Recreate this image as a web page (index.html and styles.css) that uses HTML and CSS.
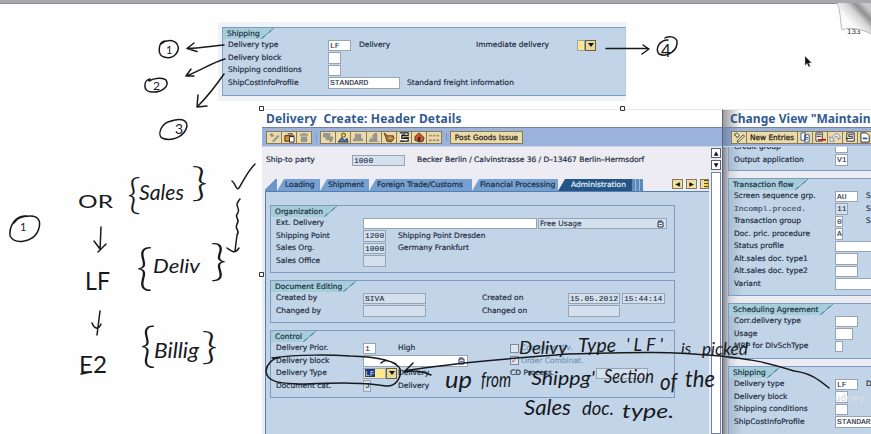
FILE: index.html
```html
<!DOCTYPE html>
<html lang="en">
<head>
<meta charset="utf-8">
<title>Shipping – Delivery type</title>
<link rel="stylesheet" href="styles.css">
</head>
<body>
<main class="slide">
  <div class="topbar"></div>

  <section class="clip">
    <div class="group top-ship">
      <h3>Shipping</h3>
      <div class="row"><label>Delivery type</label><i class="f w23">LF</i><span class="gap8 w117">Delivery</span><span class="w101">Immediate delivery</span><i class="f yellow w8"></i><b class="drop"></b></div>
      <div class="row"><label>Delivery block</label><i class="f w13"></i></div>
      <div class="row"><label>Shipping conditions</label><i class="f w13"></i></div>
      <div class="row"><label>ShipCostInfoProfile</label><i class="f w72">STANDARD</i><span class="gap7">Standard freight information</span></div>
    </div>
  </section>

  <section class="window delivery">
    <h1 class="t1">Delivery&nbsp; Create: Header Details</h1>
    <div class="toolbar">
      <div class="btns">
        <svg viewBox="0 0 15 12"><path class="g" d="M2 3l3-2 3 3-3 2-1-2zM6 9l6-6 1.500 1.500-6 6-2 .5z"/></svg>
        <svg viewBox="0 0 15 12"><path d="M3 4h6v6H3z" fill="#ed8d24" stroke="#222"/><path d="M8 5h5v6H8z" fill="#fff" stroke="#222"/><path d="M6 2h5v3M9 3.500l2 2 2-2" fill="none" stroke="#222"/></svg>
        <svg viewBox="0 0 15 12"><path class="g" d="M3 2h9v2H3zM4 5h7v6H4zM6 1h3v1H6z"/></svg>
      </div>
      <u></u>
      <div class="btns">
        <svg viewBox="0 0 15 12"><path class="g" d="M2 1h8v5H2zM5 5h8v4H5zM9 9h3v2H9z"/></svg>
        <svg viewBox="0 0 15 12"><path d="M2 11l4-5 3 3 3-2 1 4H2z" fill="#4a78b8" stroke="#222" stroke-width=".8"/><circle cx="8" cy="3.500" r="2.200" fill="#f7d23c" stroke="#222" stroke-width=".8"/></svg>
        <svg viewBox="0 0 15 12"><path class="g" d="M4 2h7v5H4zM2 7h11v3H2z"/></svg>
        <svg viewBox="0 0 15 12"><path class="g" d="M8 1h3v9h2v1H2v-2l5-7zM4 7h2V4z"/></svg>
        <svg viewBox="0 0 15 12"><path d="M2 1l4 3h6l1 3-3 4-5-1-1-4z" fill="#a8672c" stroke="#432" stroke-width=".8"/><path d="M6 7h6M7 5.500h3" stroke="#e7b866"/></svg>
        <svg viewBox="0 0 15 12"><path d="M3 1h9v3H5v3h7v3H3" fill="#fff" stroke="#222" stroke-width="1.3"/><path d="M5 2.500h4M7 6h6M4 10h3" stroke="#222"/></svg>
        <svg viewBox="0 0 15 12"><path d="M7.500 1l5.500 5-1 4-4 1-5-2V5z" fill="#dd5420" stroke="#222" stroke-width=".8"/><path d="M6 6l3-1v5H6z" fill="#333"/></svg>
        <svg viewBox="0 0 15 12"><path d="M2 4h3m1 0h3m1 0h3M2 9h3m1 0h3m1 0h3" stroke="#a29470" stroke-width="2"/></svg>
      </div>
      <u></u>
      <button class="post">Post Goods Issue</button>
    </div>
    <div class="body">
      <div class="main">
        <div class="party"><label>Ship-to party</label><i class="f ro w53">1000</i><span>Becker Berlin / Calvinstrasse 36 / D–13467 Berlin–Hermsdorf</span></div>
        <nav class="tabs">
          <s></s><a class="ta">Loading</a><a class="tb">Shipment</a><a class="tc">Foreign Trade/Customs</a><a class="td">Financial Processing</a><a class="te on">Administration</a><em></em>
          <div class="arrows"><b>◀</b><b>▶</b><b class="list"></b></div>
        </nav>
        <div class="sheet">
          <div class="group org">
            <h3>Organization</h3>
            <div class="row"><label>Ext. Delivery</label><i class="f w174"></i><i class="f ro usage">Free Usage<svg class="doc" viewBox="0 0 7 8"><path d="M1 2h5v5H1zM1 1h4M2.500 4.500h2" fill="#e8eef4" stroke="#234"/></svg></i></div>
            <div class="row"><label>Shipping Point</label><i class="f ro w23">1200</i><span class="gap12">Shipping Point Dresden</span></div>
            <div class="row"><label>Sales Org.</label><i class="f ro w23">1000</i><span class="gap12">Germany Frankfurt</span></div>
            <div class="row"><label>Sales Office</label><i class="f ro w23"></i></div>
          </div>
          <div class="group edit">
            <h3>Document Editing</h3>
            <div class="row"><label>Created by</label><i class="f ro w63">SIVA</i><span class="gap56 w87">Created on</span><i class="f ro w52">15.05.2012</i><i class="f ro time">15:44:14</i></div>
            <div class="row"><label>Changed by</label><i class="f ro w63"></i><span class="gap56 w87">Changed on</span><i class="f ro w52"></i></div>
          </div>
          <div class="group control">
            <h3>Control</h3>
            <div class="row"><label>Delivery Prior.</label><i class="f w13">1</i><span class="gap22 w112">High</span><b class="check"></b><span class="dim">Complete dlv.</span></div>
            <div class="row"><label>Delivery block</label><i class="f w105"><svg class="doc" viewBox="0 0 7 8"><path d="M1 2h5v5H1zM1 1h4M2.500 4.500h2" fill="#e8eef4" stroke="#234"/></svg></i><b class="check far">✓</b><span class="dim">Order Combinat.</span></div>
            <div class="row"><label>Delivery Type</label><i class="f yellow w23"><mark>LF</mark></i><b class="drop"></b><span class="gap2 w112">Delivery</span><span class="w86">CD Process.</span><i class="f ro w52"></i></div>
            <div class="row"><label>Document cat.</label><i class="f ro w8">J</i><span class="gap28">Delivery</span></div>
          </div>
        </div>
      </div>
      <div class="scroll"><b>▲</b><b>▼</b><p></p></div>
    </div>
  </section>

  <section class="window view">
    <h1 class="t2">Change View "Maintain</h1>
    <div class="toolbar">
      <div class="btns">
        <svg viewBox="0 0 15 12"><path d="M2 3l3-2 3 3-3 2-1-2zM6 9l6-6 1.500 1.500-6 6-2 .5z" fill="#f5ecc9" stroke="#333" stroke-width=".9"/></svg>
        <button class="new">New Entries</button>
        <svg viewBox="0 0 15 12"><path d="M3 1h5v8H3zM7 3h5v8H7z" fill="#fff" stroke="#3c568c"/><path d="M8 6h3m-3 2h3" stroke="#3c568c"/></svg>
        <svg viewBox="0 0 15 12"><path d="M3 1h7v9H3z" fill="#fff" stroke="#333"/><path d="M4 3h5M4 5h5" stroke="#333"/><path d="M5 8.500h9" stroke="#b42020" stroke-width="2"/></svg>
        <svg viewBox="0 0 15 12"><path d="M2 5v5h5L5 8c3-5 6-4 6 0l2-1c0-6-6-7-9 0z" fill="#fff" stroke="#5d6391" stroke-width=".8"/></svg>
        <svg viewBox="0 0 15 12"><path d="M4 1h8v9H4z" fill="#fff" stroke="#222"/><path d="M3 7h7V5H6V3h5" fill="none" stroke="#222"/></svg>
        <svg viewBox="0 0 15 12"><path d="M3 1h6l3 3v7H3z" fill="#fff" stroke="#222"/><path d="M5 7h5" stroke="#26a" stroke-width="2"/></svg>
      </div>
    </div>
    <div class="vbody">
      <div class="group v1">
        <div class="row"><label>Credit group</label><i class="f w13"></i></div>
        <div class="row"><label>Output application</label><i class="f w13">V1</i></div>
      </div>
      <div class="group v2">
        <h3>Transaction flow</h3>
        <div class="row"><label>Screen sequence grp.</label><i class="f w23">AU</i><span class="gap8">S</span></div>
        <div class="row"><label class="mono">Incompl.proced.</label><i class="f ro w13">11</i><span class="gap18">S</span></div>
        <div class="row"><label>Transaction group</label><i class="f w8">0</i><span class="gap23">S</span></div>
        <div class="row"><label>Doc. pric. procedure</label><i class="f w8">A</i></div>
        <div class="row"><label>Status profile</label><i class="f w72"></i></div>
        <div class="row"><label>Alt.sales doc. type1</label><i class="f w23"></i></div>
        <div class="row"><label>Alt.sales doc. type2</label><i class="f w23"></i></div>
        <div class="row"><label>Variant</label><i class="f w72"></i></div>
      </div>
      <div class="group v3">
        <h3>Scheduling Agreement</h3>
        <div class="row"><label>Corr.delivery type</label><i class="f w23"></i></div>
        <div class="row"><label>Usage</label><i class="f w18"></i></div>
        <div class="row"><label>MRP for DlvSchType</label><i class="f w8"></i></div>
      </div>
      <div class="group v4">
        <h3>Shipping</h3>
        <div class="row"><label>Delivery type</label><i class="f w23">LF</i><span class="gap8">D</span></div>
        <div class="row"><label>Delivery block</label><i class="f w13"></i></div>
        <div class="row"><label>Shipping conditions</label><i class="f w13"></i></div>
        <div class="row"><label>ShipCostInfoProfile</label><i class="f w72">STANDARD</i></div>
      </div>
    </div>
  </section>

  <svg class="ink" viewBox="0 0 871 434">
    <defs>
      <linearGradient id="curl" gradientUnits="userSpaceOnUse" x1="843" y1="28" x2="866" y2="6"><stop offset="0" stop-color="#fff"/><stop offset=".3" stop-color="#f8f8f8"/><stop offset=".6" stop-color="#d4d4d4"/><stop offset=".8" stop-color="#909090"/><stop offset="1" stop-color="#c8c8c8"/></linearGradient>
    </defs>
    <text class="page" x="847" y="34">133</text>
    <path d="M837 3C841 12 840 22 842 29.500C851 27 862 29 871 34V3z" fill="url(#curl)"/>
    <path d="M837 3C841 12 840 22 842 29.500C851 27 862 29 871 34" fill="none" stroke="#aaa" stroke-width=".8"/>
    <path d="M805 56v9.500l2.200-2 1.500 3.500 1.600-.8-1.600-3.200h3z" fill="#111" stroke="#ccc" stroke-width=".4"/>
    <g class="handles"><path d="M259.500 106.500h4v4h-4zM620.500 106.500h4v4h-4zM259.500 272.500h4v4h-4z"/></g>
    <text class="mark" x="835" y="401" textLength="29">udemy</text>

    <g class="pen">
      <path d="M165 41C158 42 157 55 164 57C174 60 181 51 177 44C173 39 165 40 161 44"/>
      <path d="M150 79C143 80 143 92 151 92C162 93 170 86 166 80C163 77 154 78 149 81"/>
      <path d="M172 121C161 122 157 135 162 138C171 142 185 137 187 126C187 119 179 118 171 121"/>
      <path d="M668 40C659 40 655 49 659 54C668 58 678 50 677 41C675 36 668 36 665 38"/>
      <path d="M224 45C212 46 200 48 187 48.500M194 43L187 48.500L197 51.500"/>
      <path d="M225 59C213 62 198 72 186 76M191 69L186 76L194 76"/>
      <path d="M224 74C217 84 207 97 198 106M198 95L197 107L207 106"/>
      <path d="M606 48.500H648M643 45L649 49L642 54"/>
      <path d="M26 216C15 215 9 227 10 236C15 245 31 242 37 233C42 223 40 216 30 216C20 216 16 219 14 223"/>
      <path d="M101 227L100 250M94 241L100 249M106 244L98 252"/>
      <path d="M100 311L97 335M92 323C94 328 98 331 101 324"/>
      <path d="M232 181C236 184 236 191 239 188C243 181 248 171 255 164"/>
      <path d="M240 199C233 207 241 207 238 213C233 217 241 219 237 224C234 230 241 230 237 235L235 251M227 248C233 252 235 254 239 248"/>
      <path d="M81 374L91 372" stroke-width="2.500"/>
      <path d="M272 358C298 354 335 355 350 356C383 357 397 362 400 369C402 378 395 387 386 386C364 382 336 383 301 384C284 383 267 384 266 371C267 364 271 359 280 357M381 363C386 358 391 362 396 364"/>
      <path d="M829 388C818 379 810 373 794 371C757 359 742 359 721 356C655 350 618 353 568 354C518 358 455 362 404 371M413 363L404 372C414 370 424 372 431 375"/>
    </g>

    <g class="hand">
      <text x="166" y="54" font-size="11">1</text>
      <text x="153" y="90" font-size="12">2</text>
      <text x="175" y="134" font-size="14">3</text>
      <text x="661" y="57" font-size="17">4</text>
      <text x="20" y="231" font-size="11">1</text>
      <text x="78" y="208" font-size="18" textLength="35" lengthAdjust="spacingAndGlyphs">OR</text>
      <text x="85" y="290" font-size="25" textLength="25" lengthAdjust="spacingAndGlyphs">LF</text>
      <text x="79" y="373" font-size="24" textLength="28" lengthAdjust="spacingAndGlyphs">E2</text>
      <g class="brace">
        <text x="127" y="209" font-size="42" textLength="14" lengthAdjust="spacingAndGlyphs">{</text><text x="191" y="196" font-size="40" textLength="17" lengthAdjust="spacingAndGlyphs">}</text>
        <text x="136" y="284" font-size="49" textLength="17" lengthAdjust="spacingAndGlyphs">{</text><text x="210" y="276" font-size="43" textLength="17" lengthAdjust="spacingAndGlyphs">}</text>
        <text x="140" y="362" font-size="48" textLength="16" lengthAdjust="spacingAndGlyphs">{</text><text x="201" y="359" font-size="38" textLength="17" lengthAdjust="spacingAndGlyphs">}</text>
      </g>
      <g class="script">
        <text x="139" y="200" font-size="21" textLength="45" lengthAdjust="spacingAndGlyphs">Sales</text>
        <text x="153" y="273" font-size="20" textLength="47" lengthAdjust="spacingAndGlyphs">Deliv</text>
        <text x="154" y="358" font-size="21" textLength="45" lengthAdjust="spacingAndGlyphs">Billig</text>
        <text x="519" y="354" font-size="18" textLength="48" lengthAdjust="spacingAndGlyphs">Delivy</text>
        <text x="578" y="352" font-size="19" textLength="38" lengthAdjust="spacingAndGlyphs">Type</text>
        <text x="626" y="351" font-size="18" textLength="37">'LF'</text>
        <text x="681" y="354" font-size="16">is</text>
        <text x="702" y="355" font-size="18" textLength="46" lengthAdjust="spacingAndGlyphs">picked</text>
        <text x="445" y="388" font-size="24" textLength="27" lengthAdjust="spacingAndGlyphs">up</text>
        <text x="481" y="387" font-size="21" textLength="30" lengthAdjust="spacingAndGlyphs">from</text>
        <text x="527" y="385" font-size="20" textLength="68" lengthAdjust="spacingAndGlyphs">'Shippg'</text>
        <text x="604" y="383" font-size="19" textLength="50" lengthAdjust="spacingAndGlyphs">Section</text>
        <text x="660" y="390" font-size="24" textLength="17" lengthAdjust="spacingAndGlyphs">of</text>
        <text x="685" y="387" font-size="23" textLength="30" lengthAdjust="spacingAndGlyphs">the</text>
        <text x="524" y="415" font-size="21" textLength="47" lengthAdjust="spacingAndGlyphs">Sales</text>
        <text x="582" y="415" font-size="19" textLength="32" lengthAdjust="spacingAndGlyphs">doc.</text>
        <text x="622" y="418" font-size="20" textLength="52" lengthAdjust="spacingAndGlyphs">type.</text>
      </g>
    </g>
  </svg>
</main>
</body>
</html>
```
FILE: styles.css
```css
* { box-sizing: border-box; }
body { margin: 0; }
.slide {
  position: relative;
  width: 871px;
  height: 434px;
  overflow: hidden;
  background: #fefefe;
  color: #1d2b40;
  font: 7.5px/12.5px "DejaVu Sans", "Noto Sans", sans-serif;
  white-space: nowrap;
}
.topbar { height: 4px; background: #aaa8ac; border-bottom: 1px solid #8f8e92; }
i, em { font-style: normal; }
h1, h3, p { margin: 0; font-weight: 400; }
label, .row span, .party, h3 { -webkit-text-stroke: .18px #1d2b40; }

/* Group boxes */
.group { border: 1px solid #7c9cc6; background: #c2d5e8; overflow: hidden; }
.group h3 {
  width: fit-content;
  height: 11px;
  padding: 0 14px 0 4px;
  font-size: 7.5px;
  line-height: 11px;
  background: linear-gradient(to bottom right, #a5ced8 0 47%, #5c93b4 48% 53%, transparent 54%) right / 13px 11px no-repeat,
              linear-gradient(#a5ced8, #a5ced8) left / calc(100% - 13px) 11px no-repeat;
}
.row { display: flex; align-items: center; height: 12.5px; padding-left: 5px; }
.row > *, .party > * { flex: none; }
.f {
  display: block;
  height: 11.5px;
  padding-left: 1px;
  border: 1px solid #96a4b4;
  background: #fff;
  font: 8px/9.5px "Liberation Mono", monospace;
  -webkit-text-stroke: .1px #1d2b40;
  overflow: hidden;
}
.f.ro { background: #d4e0ee; }
.f.yellow { background: #ffe98c; }
.f mark { display: inline-block; height: 8px; line-height: 9px; color: #e6edff; background: #193a8c; }
.drop { width: 11px; height: 11px; border: 1px solid #6d6038; background: #e9d7a0; display: grid; place-items: center; }
.drop::after { content: ""; border: 3px solid transparent; border-top: 4px solid #111; border-bottom: 0; }
.w8 { width: 8px; } .w13 { width: 13px; } .w18 { width: 18px; } .w23 { width: 23px; }
.w52 { width: 52px; } .w53 { width: 53px; } .w63 { width: 63px; } .w72 { width: 72px; }
.w86 { width: 86px; } .w87 { width: 86px; } .w101 { width: 101px; } .w105 { width: 105px; }
.w112 { width: 112px; } .w117 { width: 117px; } .w174 { width: 174px; }
.gap2 { margin-left: 1px; } .gap7 { margin-left: 7px; } .gap8 { margin-left: 8px; }
.gap12 { margin-left: 12px; } .gap18 { margin-left: 18px; } .gap22 { margin-left: 22px; }
.gap23 { margin-left: 23px; } .gap28 { margin-left: 27px; } .gap56 { margin-left: 56px; }

/* Shipping excerpt */
.clip { width: 408px; height: 79px; margin: 18px 0 0 218px; padding: 5px 0 0 4px; background: #f0f2f5; }
.top-ship { height: 69px; border-left-color: #7ca5ca; border-right-color: #b5cbe2; }
.top-ship label { width: 100px; }

/* Windows */
.window { position: absolute; top: 109px; height: 325px; border-top: 1px solid #e8e8e8; background: #ececf2; }
.delivery { left: 262px; width: 461px; }
.view { left: 722px; width: 149px; overflow: hidden; border-left: 1px solid #5e6472; }
.window h1 {
  height: 18px;
  padding-left: 4px;
  background: #fff;
  border-bottom: 1px solid #74829a;
  color: #315a8f;
  font: bold 12px/17px "Noto Sans", "Open Sans", sans-serif;
  letter-spacing: .18px;
}
.window .t2 { letter-spacing: .05px; }
.toolbar { display: flex; align-items: center; gap: 3.5px; height: 19px; padding-left: 4px; background: #9ab2dc; border-bottom: 1px solid #cfd7e7; }
.toolbar u { width: 1px; height: 8px; background: #7f94b7; }
.btns { display: flex; height: 13px; border-left: 1px solid #847b5c; }
.btns svg { width: 15.1px; height: 13px; border: 1px solid #847b5c; border-left: 0; background: #ecdba8; }
.g { fill: #99958f; }
button { height: 13px; padding: 0; border: 1px solid #847b5c; background: #ecdba8; color: #222; font: 7.4px/11px "DejaVu Sans", sans-serif; -webkit-text-stroke: .25px #222; }
.post { width: 73px; letter-spacing: .05px; }
.new { width: 51px; border-left: 0; }
.body { display: flex; height: 287px; }
.main { width: 447px; }
.party { display: flex; align-items: center; height: 31px; padding: 0 0 4px 4px; }
.party label { width: 86px; }
.party span { margin-left: 12px; }

/* Tab strip */
.tabs { display: flex; height: 12px; padding-left: 3px; margin-top: 1px; }
.tabs s { width: 12px; background: linear-gradient(135deg, transparent 42%, #6d96c8 43%); }
.tabs a {
  padding-left: 8px;
  line-height: 12px;
  background: #75a0d1;
  clip-path: polygon(7px 0, 100% 0, 100% 100%, 0 100%);
  -webkit-text-stroke: .2px #1d2b40;
}
.ta { width: 43px; } .tb { width: 49px; } .tc { width: 103px; } .td { width: 86px; } .te { width: 74px; }
.tabs .on { padding-left: 13px; background: #245587; color: #e5eef8; -webkit-text-stroke-color: #e5eef8; }
.tabs em { width: 11px; background: repeating-linear-gradient(90deg, #5d8bbd 0 3px, #9cbbdc 3px 4px); }
.arrows { display: flex; gap: 3px; margin-left: auto; }
.arrows b { width: 11px; height: 10px; border: 1px solid #847b5c; background: #f0df9f; font: 6px/8px "DejaVu Sans"; text-align: center; color: #111; }
.arrows .list { width: 9px; background: linear-gradient(90deg, #f0df9f 3px, transparent 3px), repeating-linear-gradient(#554a20 0 1px, #efd451 1px 3px); }
.sheet { height: 244px; margin-left: 3px; padding: 13px 0 0 4px; border: solid #557fb2; border-width: 1px 0 0 1px; background: #c2d5e8; }
.sheet .group { width: 405px; margin-bottom: 7px; }
.sheet label { width: 87px; }
.org { height: 68px; }
.edit { height: 43px; }
.control { height: 68px; }
.f.usage { width: 129px; margin-left: 1px; font: 7.5px/9.5px "DejaVu Sans", sans-serif; }
.doc { float: right; width: 7px; height: 8px; margin: 1px 2px 0 0; }
.time { width: 43px; margin-left: 2px; }
.check { width: 9px; height: 9px; margin-right: 2px; border: 1px solid #7d8999; background: #dce6f1; font: 8px/7px "DejaVu Sans"; color: #a45050; }
.far { margin-left: 42px; }
.row .dim { color: #7795b7; -webkit-text-stroke-color: #7795b7; }
.scroll { width: 13px; padding: 1px 1px 0; border-left: 1px solid #e7edf5; }
.scroll b { display: block; height: 10px; margin-bottom: 2px; border: 1px solid #59616e; background: #fff; font: 6px/8px "DejaVu Sans"; color: #111; text-align: center; }
.scroll p { height: 262px; border: 1px solid #7183ad; background: #fff; }

/* Maintenance view */
.view { background: linear-gradient(90deg, #85858e, #d5d6de 7px, #ececf2 16px); }
.view h1 { padding-left: 7px; background: linear-gradient(90deg, #9c9ca0, #fff 18px); }
.view .toolbar { padding-left: 8px; background: linear-gradient(90deg, #7289b0, #9ab2dc 16px); }
.view .group { width: 150px; margin-left: 5px; margin-bottom: 7px; background: linear-gradient(90deg, #a9bccf, #c2d5e8 14px); }
.view label { width: 101px; }
.view .mono { font-family: "Liberation Mono", monospace; font-size: 8px; color: #506078; }
.v1 { height: 24px; border-top: 0; }
.v1 .row:first-child { margin-top: -6px; }
.v2 { height: 118px; }
.v3 { height: 56px; }
.v4 { height: 80px; }

/* Pen annotations */
.ink { position: absolute; inset: 0; width: 871px; height: 434px; }
.pen path { fill: none; stroke: #17191d; stroke-width: 1.5; stroke-linecap: round; stroke-linejoin: round; }
.handles path { fill: #fff; stroke: #333; stroke-width: 1; }
.hand { fill: #17191d; font-family: Lato, "Noto Sans", sans-serif; font-weight: 400; }
.script { font-style: italic; }
.brace { font-weight: 300; }
.page { font: 8px "Liberation Sans", sans-serif; fill: #333; }
.mark { font: 8.500px "Noto Sans", sans-serif; fill: #fff; stroke: #b9c4cf; stroke-width: .3px; }
```
